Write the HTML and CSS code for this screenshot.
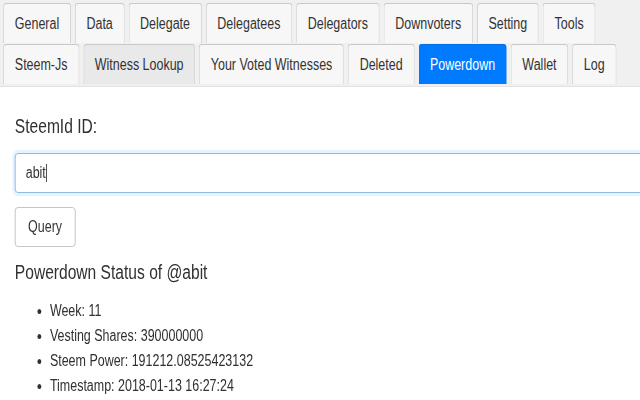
FILE: index.html
```html
<!DOCTYPE html>
<html>
<head>
<meta charset="utf-8">
<link rel="stylesheet" href="styles.css">
</head>
<body>
<div class="page">
  <nav class="tabs">
    <span class="tab">General</span>
    <span class="tab">Data</span>
    <span class="tab">Delegate</span>
    <span class="tab">Delegatees</span>
    <span class="tab">Delegators</span>
    <span class="tab">Downvoters</span>
    <span class="tab">Setting</span>
    <span class="tab">Tools</span>
    <span class="tab">Steem-Js</span>
    <span class="tab tab-hover">Witness Lookup</span>
    <span class="tab">Your Voted Witnesses</span>
    <span class="tab">Deleted</span>
    <span class="tab tab-active">Powerdown</span>
    <span class="tab">Wallet</span>
    <span class="tab">Log</span>
  </nav>
  <main class="content">
    <div class="label">SteemId ID:</div>
    <div class="input"><span>abit</span><span class="caret"></span></div>
    <button class="btn">Query</button>
    <h5 class="heading">Powerdown Status of @abit</h5>
    <ul class="list">
      <li>Week: 11</li>
      <li>Vesting Shares: 390000000</li>
      <li>Steem Power: 191212.08525423132</li>
      <li>Timestamp: 2018-01-13 16:27:24</li>
    </ul>
  </main>
</div>
</body>
</html>
```
FILE: styles.css
```css
html, body {
  margin: 0;
  padding: 0;
  background: #fff;
  overflow: hidden;
}
body {
  width: 640px;
  height: 400px;
  font-family: "Liberation Sans", Arial, sans-serif;
  color: #303030;
}
.page {
  width: 821px;
  transform: scaleX(0.7795);
  transform-origin: 0 0;
}
.tabs {
  display: flex;
  flex-wrap: wrap;
  column-gap: 5px;
  row-gap: 1px;
  padding: 3px 4px 2px;
  background: #f0f0f0;
  border-bottom: 1px solid #e2e2e2;
}
.tab {
  box-sizing: border-box;
  height: 40px;
  padding: 0 14px;
  border: 1px solid #c9c9c9;
  border-bottom: none;
  border-radius: 4px 4px 0 0;
  background: #f7f7f7;
  color: #333;
  font-size: 16px;
  line-height: 39px;
  white-space: nowrap;
}
.tab-hover {
  background: #e9e9e9;
}
.tab-active {
  background: #007bff;
  border-color: #0a6fe0;
  color: #fff;
}
.content {
  padding: 0 0 0 19px;
  overflow: hidden;
}
.label {
  margin-top: 27px;
  font-size: 20px;
  line-height: 24px;
}
.input {
  box-sizing: border-box;
  margin-top: 15px;
  margin-right: -40px;
  height: 40px;
  padding: 0 13px;
  border: 1px solid #7fb3dc;
  border-radius: 4px;
  box-shadow: 0 0 0 3px rgba(0, 123, 255, 0.1);
  font-size: 16px;
  line-height: 38px;
  color: #333;
}
.caret {
  display: inline-block;
  width: 0;
  height: 18px;
  border-left: 1px solid #222;
  vertical-align: -4px;
}
.btn {
  display: block;
  box-sizing: border-box;
  margin-top: 14px;
  height: 40px;
  padding: 0 16px;
  border: 1px solid #bdbdbd;
  border-radius: 4px;
  background: #fff;
  font-family: inherit;
  font-size: 16px;
  line-height: 38px;
  color: #333;
}
.heading {
  margin: 13px 0 0;
  font-size: 20px;
  font-weight: normal;
  line-height: 24px;
}
.list {
  margin: 14px 0 0;
  padding-left: 45px;
  font-size: 16px;
  line-height: 25px;
}
```
